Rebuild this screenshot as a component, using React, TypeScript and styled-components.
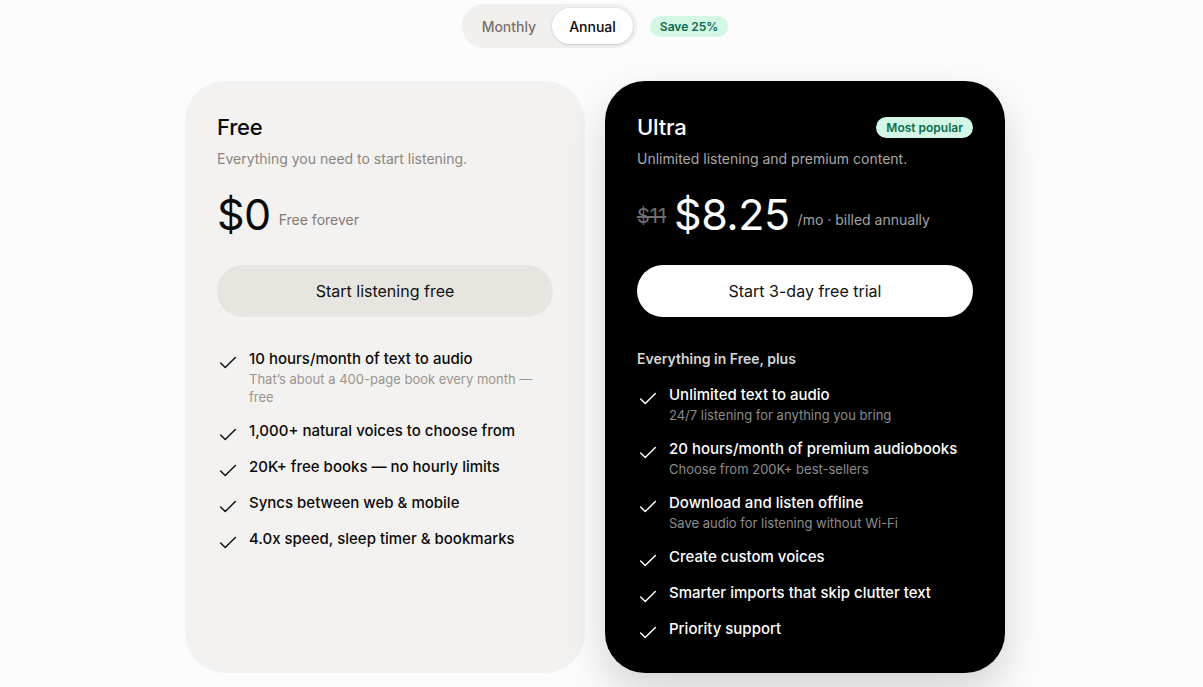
import React from "react"
import styled, { createGlobalStyle } from "styled-components"
import { Check } from "lucide-react"

const GlobalStyle = createGlobalStyle`
    html, body {
        margin: 0;
        padding: 0;
        background: #fcfcfc;
        font-family: Inter, "Noto Sans", sans-serif;
        color: #111;
        -webkit-font-smoothing: antialiased;
    }
    * { box-sizing: border-box; }
`

// room on the right stands in for the scrollbar of the original page
const Page = styled.main`
    display: flex;
    flex-direction: column;
    align-items: center;
    padding: 4px 13px 40px 0;
`

const BillingRow = styled.div`
    display: flex;
    align-items: center;
    gap: 13px;
`

const Toggle = styled.div`
    display: flex;
    padding: 4px;
    border-radius: 999px;
    background: #f2f0ee;
`

const ToggleButton = styled.button<{ $active?: boolean }>`
    height: 36px;
    padding: 0 ${p => (p.$active ? "17px" : "16px")};
    border: none;
    border-radius: 999px;
    font-family: inherit;
    font-size: 14px;
    font-weight: 500;
    cursor: pointer;
    color: ${p => (p.$active ? "#0a0a0a" : "#77726d")};
    background: ${p => (p.$active ? "#fff" : "transparent")};
    box-shadow: ${p => (p.$active ? "0 1px 3px rgba(0,0,0,0.12), 0 0 0 1px rgba(0,0,0,0.03)" : "none")};
`

const Pill = styled.span`
    display: inline-flex;
    align-items: center;
    height: 21px;
    padding: 0 10px;
    border-radius: 999px;
    background: #d3f7e4;
    color: #0b6b4e;
    font-size: 12px;
    font-weight: 600;
`

const Plans = styled.div`
    display: flex;
    gap: 20px;
    margin-top: 33px;
`

const Card = styled.section<{ $dark?: boolean }>`
    width: 400px;
    height: 592px;
    padding: 32px;
    border-radius: 40px;
    background: ${p => (p.$dark ? "#000" : "#f4f2f0")};
    color: ${p => (p.$dark ? "#fff" : "#0a0a0a")};
    box-shadow: ${p => (p.$dark ? "0 18px 40px rgba(0,0,0,0.16)" : "none")};
`

const CardHead = styled.div`
    display: flex;
    align-items: center;
    justify-content: space-between;
    height: 28px;
`

const PlanName = styled.h2`
    margin: 0;
    font-size: 22px;
    font-weight: 500;
    letter-spacing: -0.2px;
`

const Tagline = styled.p<{ $dark?: boolean }>`
    margin: 8px 0 0;
    font-size: 14px;
    line-height: 20px;
    color: ${p => (p.$dark ? "#a8a8a8" : "#8a8580")};
`

const PriceRow = styled.div`
    display: flex;
    align-items: flex-end;
    gap: 8px;
    margin-top: 24px;
`

const OldPrice = styled.s`
    font-size: 20px;
    line-height: 28px;
    color: #6e6e6e;
    margin-bottom: 5px;
`

const Amount = styled.span`
    font-size: 43px;
    line-height: 42px;
    font-weight: 400;
    letter-spacing: -0.5px;
`

const PriceNote = styled.span<{ $dark?: boolean }>`
    font-size: 14px;
    line-height: 20px;
    margin-bottom: 5px;
    color: ${p => (p.$dark ? "#a3a3a3" : "#807b76")};
`

const CtaButton = styled.button<{ $dark?: boolean }>`
    display: block;
    margin-top: 30px;
    height: 52px;
    width: 100%;
    border: none;
    border-radius: 999px;
    font-family: inherit;
    font-size: 16px;
    color: #111;
    background: ${p => (p.$dark ? "#fff" : "#e8e5e0")};
    cursor: pointer;
`

const ListLabel = styled.div`
    margin-top: 32px;
    font-size: 14px;
    line-height: 20px;
    font-weight: 600;
    color: #d6d6d6;
`

const Features = styled.ul<{ $tight?: boolean }>`
    list-style: none;
    margin: ${p => (p.$tight ? "15px" : "31px")} 0 0;
    padding: 0;
    display: flex;
    flex-direction: column;
    gap: 14px;
`

const Feature = styled.li`
    display: flex;
    align-items: flex-start;
    gap: 10px;
    svg { flex: none; margin: 4px 0 -4px; }
`

const FeatureTitle = styled.div`
    font-size: 15px;
    line-height: 22px;
    font-weight: 500;
`

const FeatureNote = styled.div<{ $dark?: boolean }>`
    font-size: 13px;
    line-height: 18px;
    color: ${p => (p.$dark ? "#8c8c8c" : "#9a958f")};
`

type Item = { title: string; note?: string }

const freeItems: Item[] = [
    { title: "10 hours/month of text to audio", note: "That’s about a 400-page book every month — free" },
    { title: "1,000+ natural voices to choose from" },
    { title: "20K+ free books — no hourly limits" },
    { title: "Syncs between web & mobile" },
    { title: "4.0x speed, sleep timer & bookmarks" },
]

const ultraItems: Item[] = [
    { title: "Unlimited text to audio", note: "24/7 listening for anything you bring" },
    { title: "20 hours/month of premium audiobooks", note: "Choose from 200K+ best-sellers" },
    { title: "Download and listen offline", note: "Save audio for listening without Wi-Fi" },
    { title: "Create custom voices" },
    { title: "Smarter imports that skip clutter text" },
    { title: "Priority support" },
]

const FeatureList: React.FC<{ items: Item[]; dark?: boolean }> = ({ items, dark }) => (
    <Features $tight={dark}>
        {items.map(item => (
            <Feature key={item.title}>
                <Check size={22} strokeWidth={1.6} color={dark ? "#fff" : "#111"} />
                <div>
                    <FeatureTitle>{item.title}</FeatureTitle>
                    {item.note && <FeatureNote $dark={dark}>{item.note}</FeatureNote>}
                </div>
            </Feature>
        ))}
    </Features>
)

const App: React.FC = () => {
    return (
        <Page>
            <GlobalStyle />
            <BillingRow>
                <Toggle>
                    <ToggleButton>Monthly</ToggleButton>
                    <ToggleButton $active>Annual</ToggleButton>
                </Toggle>
                <Pill>Save 25%</Pill>
            </BillingRow>

            <Plans>
                <Card>
                    <CardHead>
                        <PlanName>Free</PlanName>
                    </CardHead>
                    <Tagline>Everything you need to start listening.</Tagline>
                    <PriceRow>
                        <Amount>$0</Amount>
                        <PriceNote>Free forever</PriceNote>
                    </PriceRow>
                    <CtaButton>Start listening free</CtaButton>
                    <FeatureList items={freeItems} />
                </Card>

                <Card $dark>
                    <CardHead>
                        <PlanName>Ultra</PlanName>
                        <Pill>Most popular</Pill>
                    </CardHead>
                    <Tagline $dark>Unlimited listening and premium content.</Tagline>
                    <PriceRow>
                        <OldPrice>$11</OldPrice>
                        <Amount>$8.25</Amount>
                        <PriceNote $dark>/mo · billed annually</PriceNote>
                    </PriceRow>
                    <CtaButton $dark>Start 3-day free trial</CtaButton>
                    <ListLabel>Everything in Free, plus</ListLabel>
                    <FeatureList items={ultraItems} dark />
                </Card>
            </Plans>
        </Page>
    )
}

export default App
